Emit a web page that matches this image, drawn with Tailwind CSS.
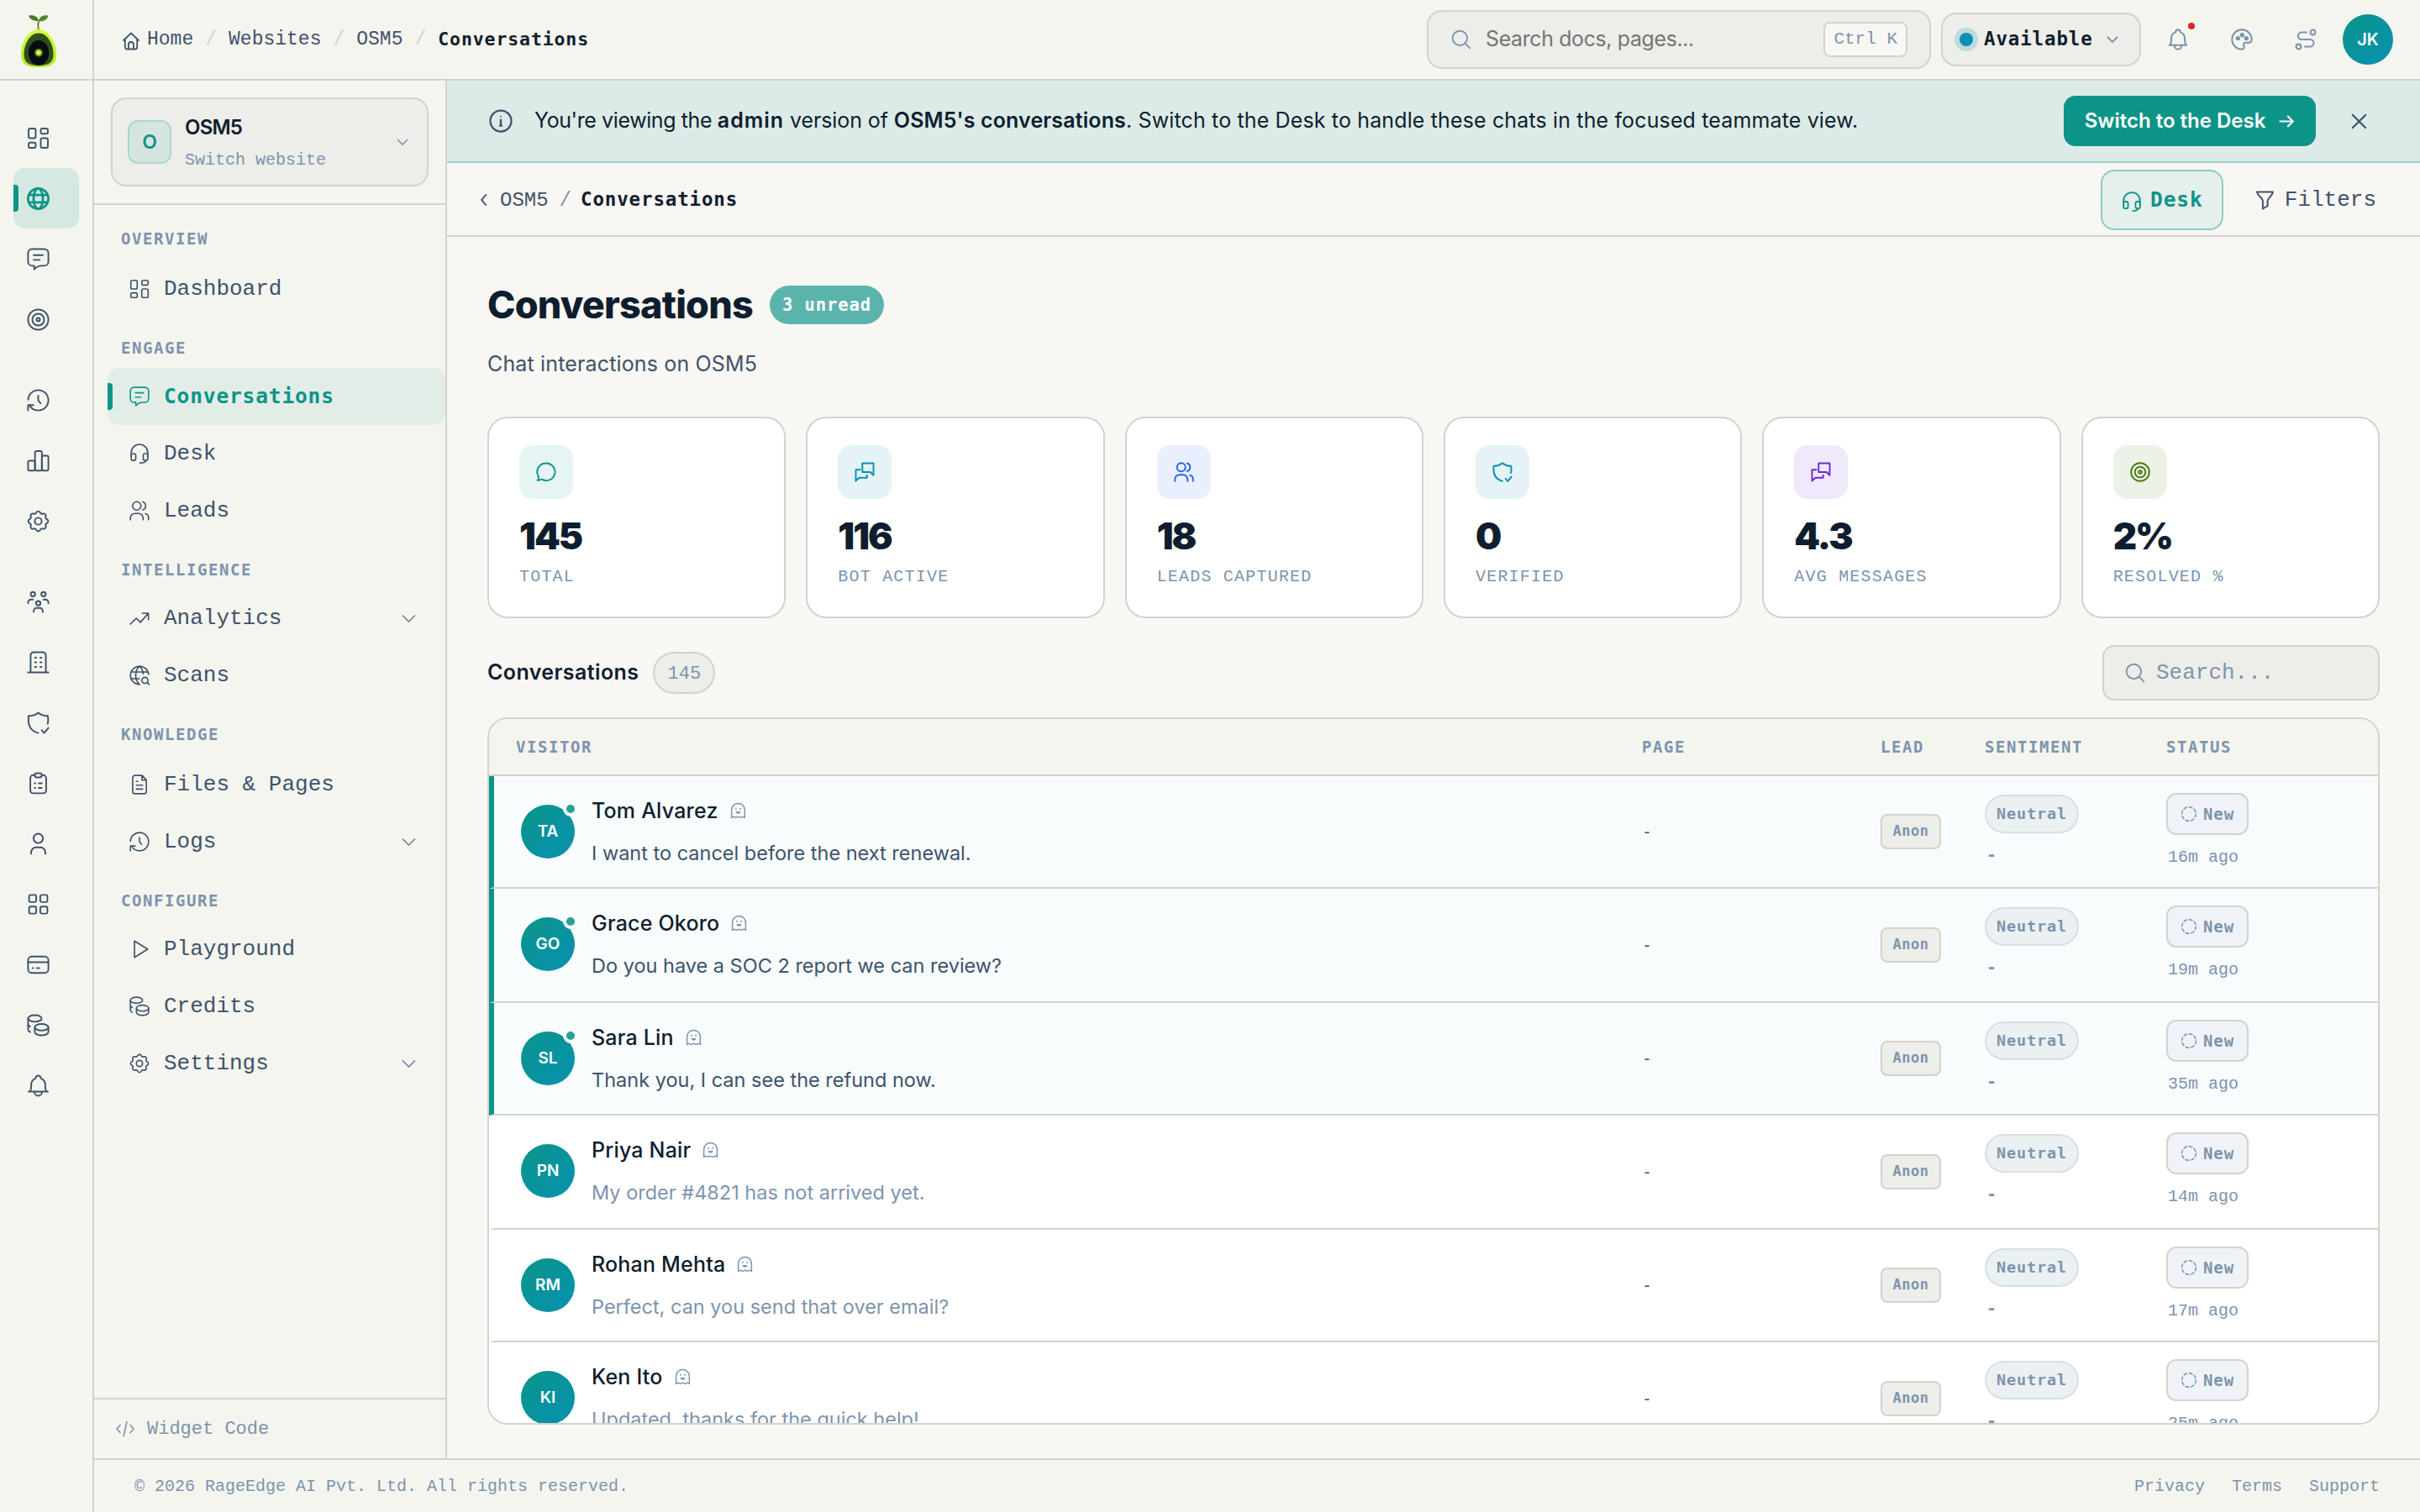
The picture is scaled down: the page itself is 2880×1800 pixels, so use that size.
<!DOCTYPE html>
<html lang="en">

<head>
    <meta charset="UTF-8">
    <meta name="viewport" content="width=device-width, initial-scale=1.0">
    <title>OSM5 - Conversations</title>
    <script src="https://cdn.jsdelivr.net/npm/@tailwindcss/browser@4"></script>
</head>

<body class="w-[2880px] h-[1800px] overflow-hidden bg-[#f9f7f4] text-[#0f1e2e] font-['Inter',sans-serif]">
    <!-- Icon sprite -->
    <svg class="hidden">
        <symbol id="i-dash" viewBox="0 0 24 24"><rect x="2.5" y="2.5" width="7" height="9.5" rx="1.6"/><rect x="2.5" y="16.3" width="7" height="5.2" rx="1.6"/><rect x="14.5" y="2.5" width="7" height="5.2" rx="1.6"/><rect x="14.5" y="12" width="7" height="9.5" rx="1.6"/></symbol>
        <symbol id="i-globe" viewBox="0 0 24 24"><circle cx="12" cy="12" r="10"/><ellipse cx="12" cy="12" rx="4.6" ry="10"/><path d="M2.800 8.300h18.400M2.800 15.700h18.400"/></symbol>
        <symbol id="i-chat" viewBox="0 0 24 24"><path d="M6 2h12a4 4 0 0 1 4 4v8.500a4 4 0 0 1-4 4h-3c-3 0-4.500.8-7 3.500v-3.500H6a4 4 0 0 1-4-4V6a4 4 0 0 1 4-4zM7.500 8h9M7.500 12.700h6"/></symbol>
        <symbol id="i-target" viewBox="0 0 24 24"><circle cx="12" cy="12" r="10"/><circle cx="12" cy="12" r="5.8"/><circle cx="12" cy="12" r="1.7"/></symbol>
        <symbol id="i-history" viewBox="0 0 24 24"><path d="M2 11.500a10 10 0 1 1 1.900 6.400M2 22v-5.300h5.300M12 7.500v4.500l2.300 3"/></symbol>
        <symbol id="i-chart" viewBox="0 0 24 24"><rect x="2" y="12" width="6.800" height="9.700" rx="1.500"/><rect x="8.800" y="2.500" width="6.800" height="19.200" rx="1.500"/><rect x="15.600" y="7" width="6.400" height="14.700" rx="1.500"/></symbol>
        <symbol id="i-gear" viewBox="0 0 24 24"><path d="M20.830 10.280a2 2 0 0 1 0 3.440A2.600 2.600 0 0 0 19.460 17.030A2 2 0 0 1 17.030 19.460A2.600 2.600 0 0 0 13.720 20.830A2 2 0 0 1 10.280 20.830A2.600 2.600 0 0 0 6.970 19.460A2 2 0 0 1 4.540 17.030A2.600 2.600 0 0 0 3.170 13.720A2 2 0 0 1 3.170 10.280A2.600 2.600 0 0 0 4.540 6.970A2 2 0 0 1 6.970 4.540A2.600 2.600 0 0 0 10.280 3.170A2 2 0 0 1 13.720 3.170A2.600 2.600 0 0 0 17.030 4.540A2 2 0 0 1 19.460 6.970A2.600 2.600 0 0 0 20.830 10.280z"/><circle cx="12" cy="12" r="3.400"/></symbol>
        <symbol id="i-team" viewBox="0 0 24 24"><circle cx="6.800" cy="4.400" r="2.200"/><circle cx="17.200" cy="4.400" r="2.200"/><circle cx="12" cy="13.300" r="2.200"/><path d="M2 13.500v-.8a3 3 0 0 1 3-3h1.800M22 13.500v-.8a3 3 0 0 0-3-3h-1.800M7.500 22v-1a3 3 0 0 1 3-3h3a3 3 0 0 1 3 3v1"/></symbol>
        <symbol id="i-building" viewBox="0 0 24 24"><path d="M4.500 22V5a3 3 0 0 1 3-3h9a3 3 0 0 1 3 3v17M2 22h20M8.800 7.500h1.200M14 7.500h1.200M8.800 12h1.200M14 12h1.200M8.800 16.500h1.200M14 16.500h1.200"/></symbol>
        <symbol id="i-shield" viewBox="0 0 24 24"><path d="M21.300 13c.6-2 .6-4.500.2-7.800-3.500.2-6.600-.8-9.500-3.200-2.900 2.400-6 3.400-9.500 3.200C1.500 13.500 3.500 19.800 12 22M15.500 19.300l2.300 2.700 4.200-5"/></symbol>
        <symbol id="i-clipboard" viewBox="0 0 24 24"><path d="M8.500 4H7a2.800 2.800 0 0 0-2.800 2.800V19A2.800 2.800 0 0 0 7 21.800h10a2.800 2.800 0 0 0 2.800-2.800V6.800A2.800 2.800 0 0 0 17 4h-1.500M8.500 12h.6M12.500 12h3M8.500 16.500h.6M12.500 16.500h3"/><rect x="8.500" y="2" width="7" height="4.200" rx="2"/></symbol>
        <symbol id="i-user" viewBox="0 0 24 24"><circle cx="12" cy="6.700" r="4.600"/><path d="M5 22v-1.500a5 5 0 0 1 5-5h4a5 5 0 0 1 5 5V22"/></symbol>
        <symbol id="i-grid" viewBox="0 0 24 24"><rect x="3" y="2.800" width="7" height="7" rx="1.500"/><rect x="14" y="2.800" width="7" height="7" rx="1.500"/><rect x="3" y="14.200" width="7" height="7" rx="1.500"/><rect x="14" y="14.200" width="7" height="7" rx="1.500"/></symbol>
        <symbol id="i-card" viewBox="0 0 24 24"><rect x="2" y="4" width="20" height="16" rx="3.500"/><path d="M2 9.500h20M6.500 15.300h.6M10.800 15.300h2.200"/></symbol>
        <symbol id="i-coins" viewBox="0 0 24 24"><ellipse cx="8.700" cy="5.300" rx="6.700" ry="3.300"/><path d="M2 5.300V16c0 1.200.8 2.200 2 2.800M2 10.500c0 1.200.8 2.200 2 2.800"/><ellipse cx="15.300" cy="14" rx="6.700" ry="3.300"/><path d="M8.600 14v4.700c0 1.800 3 3.300 6.700 3.300s6.700-1.500 6.700-3.300V14"/></symbol>
        <symbol id="i-bell" viewBox="0 0 24 24"><path d="M4 17.500c1-1.500 1.100-3.500 1.100-6.500 0-3.200 1.800-5.300 4.400-6.400C9.700 3 10.700 2 12 2s2.300 1 2.500 2.600c2.600 1.100 4.400 3.200 4.400 6.400 0 3 .1 5 1.100 6.500M2.500 17.800h19M8.300 18a3.700 4 0 0 0 7.400 0"/></symbol>
        <symbol id="i-headset" viewBox="0 0 24 24"><path d="M2.900 16v-5a9.100 9.100 0 0 1 18.200 0v5"/><rect x="2.900" y="12" width="5" height="7.500" rx="2"/><rect x="16.100" y="12" width="5" height="7.500" rx="2"/><path d="M19.500 19.300c-.4 2-2.800 3-7 3"/></symbol>
        <symbol id="i-users" viewBox="0 0 24 24"><circle cx="9" cy="6.700" r="4.600"/><path d="M15.500 2.300a4.600 4.600 0 0 1 0 8.800M2 22v-2a5 5 0 0 1 5-5h4a5 5 0 0 1 5 5v2M18.500 15.300c2.200.6 3.500 2.200 3.500 4.700v2"/></symbol>
        <symbol id="i-trend" viewBox="0 0 24 24"><path d="M2 18.500l6.500-6.500 4.500 4.500L21.300 7M15 6.500h6.800V13.500"/></symbol>
        <symbol id="i-scan" viewBox="0 0 24 24"><path d="M22 11A10 10 0 1 0 12 22M12 22c-5.500-5-5.500-15 0-20 2.500 2.300 3.900 5.400 4.100 8.500M3 8.300h18M3 15.700h9"/><circle cx="18" cy="17.500" r="3.300"/><path d="M20.500 20l2 2"/></symbol>
        <symbol id="i-file" viewBox="0 0 24 24"><path d="M15 2H7a2.500 2.500 0 0 0-2.500 2.500v15A2.500 2.500 0 0 0 7 22h10a2.500 2.500 0 0 0 2.500-2.500V7zM14.800 2v5.200h4.700M8.500 8.500H10M8.500 12.700h7M8.500 17h7"/></symbol>
        <symbol id="i-play" viewBox="0 0 24 24"><path d="M6.500 3l14.500 9-14.500 9z"/></symbol>
        <symbol id="i-code" viewBox="0 0 24 24"><path d="M6.500 7L2 12l4.500 5M17.500 7l4.500 5-4.500 5M14 3l-4 18"/></symbol>
        <symbol id="i-down" viewBox="0 0 24 24"><path d="M4 8l8 8 8-8"/></symbol>
        <symbol id="i-left" viewBox="0 0 24 24"><path d="M15.500 4l-7 8 7 8"/></symbol>
        <symbol id="i-search" viewBox="0 0 24 24"><circle cx="10.500" cy="10.500" r="8"/><path d="M16.500 16.500l5.500 5.500"/></symbol>
        <symbol id="i-home" viewBox="0 0 24 24"><path d="M2.500 11.500L12 2.500l9.500 9M4.800 9.500V19a2.500 2.500 0 0 0 2.500 2.500h9.400a2.500 2.500 0 0 0 2.500-2.500V9.500M9 21.500V16a3 3 0 0 1 6 0v5.500"/></symbol>
        <symbol id="i-info" viewBox="0 0 24 24"><circle cx="12" cy="12" r="10"/><path d="M11 11h1v5.500M10.500 16.500h3M12 7.300v.8"/></symbol>
        <symbol id="i-palette" viewBox="0 0 24 24"><path d="M12 22A10 10 0 1 1 22 12c0 3-2.500 3.600-4.700 3.300-2.300-.3-3.800.2-3.600 2 .1 1.300 1 1.900.7 3.100-.3 1-1.200 1.600-2.400 1.600z"/><g fill="currentColor"><circle cx="8" cy="10.800" r="1.400"/><circle cx="12.300" cy="7.500" r="1.400"/><circle cx="16.600" cy="10.800" r="1.400"/></g></symbol>
        <symbol id="i-route" viewBox="0 0 24 24"><circle cx="19.300" cy="4.700" r="2.500"/><circle cx="4.700" cy="19.300" r="2.500"/><path d="M13.500 4.700H7.800a3.650 3.650 0 0 0 0 7.300h8.700a3.650 3.650 0 0 1 0 7.300h-6"/></symbol>
        <symbol id="i-arrow" viewBox="0 0 24 24"><path d="M3 12h18M14 4.500l7.500 7.500-7.500 7.500"/></symbol>
        <symbol id="i-x" viewBox="0 0 24 24"><path d="M4 4l16 16M20 4L4 20"/></symbol>
        <symbol id="i-filter" viewBox="0 0 24 24"><path d="M3 2.500h18c0 4-6 6.500-6 10.500v5.500L9.500 21.500V13c0-4-6.500-6.500-6.500-10.500z"/></symbol>
        <symbol id="i-bubble" viewBox="0 0 24 24"><path d="M12 2.300a9.700 9.500 0 1 1-4.300 18c-1.700-.8-3.400 1.200-5.200 1 .9-1.500 1.600-2.800.8-5A9.700 9.500 0 0 1 12 2.300z"/></symbol>
        <symbol id="i-bubbles" viewBox="0 0 24 24"><path d="M9.500 2.300h12.200v13.200l-3.500-3.500H9.500zM7 9.500H2.300v12.200l3.700-3.500h8.500V15.500"/></symbol>
        <symbol id="i-ghost" viewBox="0 0 24 24"><path d="M3 21V10.500a9 8.800 0 0 1 18 0V21l-2.800-1.400-3 1.400-3.200-1.400L8.800 21l-3-1.400zM9 8.300v1M15 8.300v1M9.500 13.500c1.200 1.700 3.800 1.700 5 0z"/></symbol>
        <symbol id="i-dotted" viewBox="0 0 24 24"><circle cx="12" cy="12" r="10" stroke-dasharray="4.500 3.350"/></symbol>
    </svg>

    <div class="flex h-full">
        <!-- Icon rail -->
        <nav class="w-[112px] shrink-0 bg-[#f5f5ef] border-r-2 border-[#d3d3ce] flex flex-col">
            <div class="h-24 shrink-0 border-b-2 border-[#d3d3ce] pl-[25px] pt-[18px]">
                <svg class="w-[42px] h-[62px]" viewBox="0 0 42 62">
                    <defs>
                        <linearGradient id="lg-rind" x1="0" y1="0" x2="0" y2="1"><stop offset="0" stop-color="#d2ff3c"/><stop offset="1" stop-color="#b4e619"/></linearGradient>
                        <radialGradient id="lg-core"><stop offset="0" stop-color="#eaff8a"/><stop offset=".5" stop-color="#b9ea2a"/><stop offset="1" stop-color="#4d7a10" stop-opacity=".2"/></radialGradient>
                    </defs>
                    <path d="M20.500 18c1-4-2-6 1-11" fill="none" stroke="#4a7c1f" stroke-width="1.700"/>
                    <path d="M21 7C18 7.500 11 6.500 9 .8 14-.6 20 1 21 7z" fill="#4a7c1f"/>
                    <path d="M21 7C22 1 28-.6 32.500.8 31 6.500 25 8 21 7z" fill="#4f8424"/>
                    <path d="M21 17C34 17 42 34 42 47c0 12-8 15-21 15S0 59 0 47C0 34 8 17 21 17z" fill="url(#lg-rind)"/>
                    <path d="M21 21.500c11 0 17.500 14 17.500 25C38.500 57 32 60 21 60S3.500 57 3.500 46.500c0-11 6.500-25 17.500-25z" fill="#2f4f1b"/>
                    <ellipse cx="21" cy="45" rx="12.200" ry="15" fill="#080d14"/>
                    <circle cx="21" cy="44.700" r="5.500" fill="url(#lg-core)"/>
                </svg>
            </div>
            <div id="rail" class="pt-8 pl-4 text-[#3d536b]"></div>
        </nav>

        <div class="flex-1 min-w-0 flex flex-col">
            <!-- Top bar -->
            <header class="h-24 shrink-0 bg-[#f5f5ef] border-b-2 border-[#d3d3ce] flex items-center justify-between pl-8 pr-8">
                <div class="flex items-center gap-[14px] font-['Liberation_Mono',monospace] text-[23px] text-[#3d536b]">
                    <span class="flex items-center gap-[7px]"><svg class="size-[24px] mt-1" fill="none" stroke="currentColor" stroke-width="1.800"><use href="#i-home"/></svg>Home</span>
                    <span class="text-[#d3d3ce]">/</span>
                    <span>Websites</span>
                    <span class="text-[#d3d3ce]">/</span>
                    <span>OSM5</span>
                    <span class="text-[#d3d3ce]">/</span>
                    <span class="font-['DejaVu_Sans_Mono',monospace] text-[21.5px] tracking-[0.88px] font-bold text-[#0f1e2e]">Conversations</span>
                </div>
                <div class="flex items-center">
                    <div class="w-[600px] h-[70px] rounded-[18px] border-2 border-[#d3d3ce] bg-[#edede9] flex items-center pl-[26px] pr-[26px]">
                        <svg class="size-[26px] text-[#7c94ae]" fill="none" stroke="currentColor" stroke-width="1.700"><use href="#i-search"/></svg>
                        <span class="ml-[16px] text-[25px] tracking-[-0.4px] text-[#757575]">Search docs, pages...</span>
                        <span class="ml-auto h-[42px] rounded-lg border-2 border-[#d3d3ce] bg-[#f9f7f4] px-[10px] flex items-center font-['Liberation_Mono',monospace] text-[21px] text-[#7c94ae]">Ctrl K</span>
                    </div>
                    <div class="ml-3 w-[238px] h-16 rounded-[18px] border-2 border-[#d3d3ce] bg-[#edede9] flex items-center pl-[14px] pr-[23px]">
                        <span class="size-7 rounded-full bg-[#0891b2]/20 flex items-center justify-center"><span class="size-4 rounded-full bg-[#0891b2]"></span></span>
                        <span class="ml-[7px] font-['DejaVu_Sans_Mono',monospace] font-bold text-[22.5px] tracking-[0.85px]">Available</span>
                        <svg class="ml-auto size-[18px] text-[#7c94ae]" fill="none" stroke="currentColor" stroke-width="2.500"><use href="#i-down"/></svg>
                    </div>
                    <div class="ml-[30px] flex items-center gap-12 text-[#7c94ae]">
                        <span class="relative size-7">
                            <svg class="size-[28px]" fill="none" stroke="currentColor" stroke-width="1.800"><use href="#i-bell"/></svg>
                            <span class="absolute left-[26px] -top-[6px] size-2 rounded-full bg-[#dc2626]"></span>
                        </span>
                        <svg class="size-[28px]" fill="none" stroke="currentColor" stroke-width="1.800"><use href="#i-palette"/></svg>
                        <svg class="size-[28px]" fill="none" stroke="currentColor" stroke-width="1.800"><use href="#i-route"/></svg>
                    </div>
                    <span class="ml-[30px] size-[60px] rounded-full bg-linear-to-br from-[#0d9488] to-[#0891b2] text-white text-[20px] font-semibold flex items-center justify-center">JK</span>
                </div>
            </header>

            <div class="flex-1 min-h-0 flex">
                <!-- Website sidebar -->
                <aside class="w-[420px] shrink-0 bg-[#f5f5ef] border-r-2 border-[#d3d3ce] flex flex-col">
                    <div class="h-[148px] shrink-0 border-b-2 border-[#d3d3ce] p-5">
                        <div class="h-[106px] w-[378px] rounded-[18px] border-2 border-[#d3d3ce] bg-[#edede9] flex items-center pl-[18px] pr-[20px]">
                            <span class="size-[52px] rounded-xl border-2 border-[#add6cf] bg-[#d6e4e0] text-[#0d9488] text-[23px] font-semibold flex items-center justify-center">O</span>
                            <div class="ml-4 pt-[3px] flex flex-col">
                                <span class="text-[24px] tracking-[-0.8px] leading-[34px] font-semibold">OSM5</span>
                                <span class="mt-[6px] font-['Liberation_Mono',monospace] text-[20px] leading-[32px] text-[#7c94ae]">Switch website</span>
                            </div>
                            <svg class="ml-auto size-[18px] text-[#7c94ae]" fill="none" stroke="currentColor" stroke-width="2.200"><use href="#i-down"/></svg>
                        </div>
                    </div>
                    <div id="sidebar" class="flex-1 pl-4 font-['Liberation_Mono',monospace] text-[#3d536b]"></div>
                    <div class="h-[72px] shrink-0 border-t-2 border-[#d3d3ce] flex items-center pl-[25px] gap-[14px] font-['Liberation_Mono',monospace] text-[22px] text-[#7c94ae]">
                        <svg class="size-[24px]" fill="none" stroke="currentColor" stroke-width="1.600"><use href="#i-code"/></svg>Widget Code
                    </div>
                </aside>

                <main class="flex-1 min-w-0 flex flex-col">
                    <div class="h-[98px] shrink-0 bg-[#dcebe7] border-b-2 border-[#98d0c9] flex items-center pl-[49px] pr-[60px]">
                        <svg class="size-[30px] text-[#3d536b]" fill="none" stroke="currentColor" stroke-width="1.800"><use href="#i-info"/></svg>
                        <p class="ml-[25px] text-[25px] whitespace-pre"><span class="tracking-[-0.4px]">You're viewing the </span><b class="font-semibold tracking-[1px]">admin</b><span class="tracking-[-0.1px]"> version of </span><b class="font-semibold tracking-[0.13px]">OSM5's conversations</b><span class="tracking-[0.14px]">. Switch to the Desk to handle these chats in the focused teammate view.</span></p>
                        <span class="ml-auto w-[300px] h-[60px] rounded-[14px] bg-[#0d9488] text-[#fdfcfa] text-[24px] font-semibold flex items-center justify-center gap-[14px]">Switch to the Desk<svg class="size-[21px]" fill="none" stroke="currentColor" stroke-width="2.300"><use href="#i-arrow"/></svg></span>
                        <svg class="ml-[39px] size-[25px] text-[#3d536b]" fill="none" stroke="currentColor" stroke-width="2.100"><use href="#i-x"/></svg>
                    </div>

                    <div class="h-[88px] shrink-0 border-b-2 border-[#d3d3ce] flex items-center justify-between pl-[34px] pr-[52px] pt-[2px] font-['Liberation_Mono',monospace]">
                        <div class="flex items-center text-[24px] text-[#3d536b]">
                            <svg class="size-[20px]" fill="none" stroke="currentColor" stroke-width="2.200"><use href="#i-left"/></svg>
                            <span class="ml-[9px] pt-[2px]">OSM5</span>
                            <span class="ml-[13px] pt-[2px] text-[#7c94ae]">/</span>
                            <span class="ml-[11px] font-['DejaVu_Sans_Mono',monospace] text-[22.5px] tracking-[0.85px] font-bold text-[#0f1e2e]">Conversations</span>
                        </div>
                        <div class="flex items-center text-[26px]">
                            <span class="w-[146px] h-[72px] rounded-[16px] border-2 border-[#8fcac3] bg-[#e5efeb] text-[#0d9488] font-['DejaVu_Sans_Mono',monospace] font-bold text-[24.5px] tracking-[0.85px] flex items-center justify-center gap-[9px]"><svg class="size-[26px] mt-1" fill="none" stroke="currentColor" stroke-width="1.700"><use href="#i-headset"/></svg>Desk</span>
                            <span class="ml-[37px] flex items-center gap-[11px] text-[#3d536b]"><svg class="size-[25px]" fill="none" stroke="currentColor" stroke-width="1.900"><use href="#i-filter"/></svg>Filters</span>
                        </div>
                    </div>

                    <div class="flex-1 min-h-0 flex flex-col px-12 pb-10">
                        <div class="mt-[58px] flex items-center">
                            <h1 class="text-[45px] leading-[46px] tracking-[-0.8px] font-extrabold">Conversations</h1>
                            <span class="ml-[20px] w-[136px] h-[46px] rounded-full bg-[#5bb4ab] text-white font-['DejaVu_Sans_Mono',monospace] font-bold text-[20.5px] tracking-[0.9px] flex items-center justify-center">3 unread</span>
                        </div>
                        <p class="mt-[29px] text-[25px] leading-[36px] tracking-[0.15px] text-[#3d536b]">Chat interactions on OSM5</p>

                        <div id="stats" class="mt-[45px] grid grid-cols-6 gap-6"></div>

                        <div class="mt-8 h-[66px] shrink-0 flex items-center">
                            <h2 class="text-[25px] font-semibold tracking-[0.4px]">Conversations</h2>
                            <span class="ml-[17px] w-[74px] h-[50px] rounded-full border-2 border-[#d3d3ce] bg-[#edede9] text-[#7c94ae] font-['Liberation_Mono',monospace] text-[22px] flex items-center justify-center pt-[2px]">145</span>
                            <div class="ml-auto w-[330px] h-[66px] rounded-[14px] border-2 border-[#d3d3ce] bg-[#edede9] text-[#7c94ae] font-['Liberation_Mono',monospace] text-[26px] flex items-center pl-[24px] gap-[12px]">
                                <svg class="size-[26px]" fill="none" stroke="currentColor" stroke-width="1.700"><use href="#i-search"/></svg>Search...
                            </div>
                        </div>

                        <!-- Conversation table -->
                        <div class="mt-5 flex-1 min-h-0 rounded-[24px] border-2 border-[#d3d3ce] bg-white overflow-hidden">
                            <div class="h-[68px] bg-[#f5f5ef] border-b-2 border-[#d3d3ce] pl-[6px] grid grid-cols-[1366px_284px_124px_216px_1fr] items-center font-['DejaVu_Sans_Mono',monospace] font-bold text-[19px] tracking-[1.56px] text-[#7c94ae]">
                                <span class="pl-[26px]">VISITOR</span><span>PAGE</span><span>LEAD</span><span>SENTIMENT</span><span>STATUS</span>
                            </div>
                            <div id="rows"></div>
                        </div>
                    </div>
                </main>
            </div>

            <footer class="h-[64px] shrink-0 bg-[#f5f5ef] border-t-2 border-[#d3d3ce] flex items-center justify-between px-12 pt-[2px] font-['Liberation_Mono',monospace] text-[20px] text-[#7c94ae]">
                <span>© 2026 RageEdge AI Pvt. Ltd. All rights reserved.</span>
                <span class="flex gap-8"><span>Privacy</span><span>Terms</span><span>Support</span></span>
            </footer>
        </div>
    </div>

    <script>
        const icon = (name, cls, sw) => `<svg class="${cls}" fill="none" stroke="currentColor" stroke-width="${sw}" stroke-linecap="round" stroke-linejoin="round"><use href="#i-${name}"/></svg>`;

        // Rail groups
        const rail = [
            ['dash', 'globe', 'chat', 'target'],
            ['history', 'chart', 'gear'],
            ['team', 'building', 'shield', 'clipboard', 'user', 'grid', 'card', 'coins', 'bell']
        ];
        document.getElementById('rail').innerHTML = rail.map(group => `<div class="mb-6">${group.map(name => name === 'globe'
            ? `<div class="relative w-[78px] h-[72px] rounded-[14px] bg-[#d5e8e2] text-[#0d9488] flex items-center pl-[15px]">
                   <span class="absolute left-0 top-5 w-[6px] h-8 rounded-r bg-[#0d9488]"></span>${icon(name, 'size-[29px]', 2.3)}
               </div>`
            : `<div class="h-[72px] flex items-center pl-[15px]">${icon(name, 'size-[29px]', 1.6)}</div>`).join('')}</div>`).join('');

        // Sidebar sections
        const sections = [
            ['OVERVIEW', 'h-[66px] pt-[30px]', [['dash', 'Dashboard']]],
            ['ENGAGE', 'h-[60px] pt-[26px]', [['chat', 'Conversations', 'active'], ['headset', 'Desk'], ['users', 'Leads']]],
            ['INTELLIGENCE', 'h-[60px] pt-[26px]', [['trend', 'Analytics', 'more'], ['scan', 'Scans']]],
            ['KNOWLEDGE', 'h-[62px] pt-[26px]', [['file', 'Files &amp; Pages'], ['history', 'Logs', 'more']]],
            ['CONFIGURE', 'h-[60px] pt-[26px]', [['play', 'Playground'], ['coins', 'Credits'], ['gear', 'Settings', 'more']]]
        ];
        document.getElementById('sidebar').innerHTML = sections.map(([label, cls, items]) => `
            <div class="${cls} pl-4 font-['DejaVu_Sans_Mono',monospace] text-[19px] leading-[20px] font-bold tracking-[1.56px] text-[#7c94ae]">${label}</div>
            ${items.map(([name, text, state]) => `
            <div class="relative h-[68px] flex items-center pl-[25px] ${state === 'active' ? "rounded-[14px] bg-[#e3ede8] text-[#0d9488] font-['DejaVu_Sans_Mono',monospace] font-bold text-[24.5px] tracking-[0.85px]" : 'text-[26px]'}">
                ${state === 'active' ? '<span class="absolute left-0 top-[18px] w-[6px] h-8 rounded-r bg-[#0d9488]"></span>' : ''}
                ${icon(name, 'size-[26px]', 1.5)}<span class="ml-[16px] pt-px">${text}</span>
                ${state === 'more' ? icon('down', 'ml-auto mr-[33px] size-[21px] text-[#6f859c]', 2) : ''}
            </div>`).join('')}`).join('');

        // Stat cards
        const stats = [
            ['bubble', 'bg-[#e6f4f3] text-[#0d9488]', '145', 'TOTAL'],
            ['bubbles', 'bg-[#e5f3f7] text-[#0891b2]', '116', 'BOT ACTIVE'],
            ['users', 'bg-[#e9effd] text-[#2563eb]', '18', 'LEADS CAPTURED'],
            ['shield', 'bg-[#e5f3f7] text-[#0891b2]', '0', 'VERIFIED'],
            ['bubbles', 'bg-[#f0e9fb] text-[#6d28d9]', '4.3', 'AVG MESSAGES'],
            ['target', 'bg-[#ecf2e7] text-[#4d7c0f]', '2%', 'RESOLVED %']
        ];
        document.getElementById('stats').innerHTML = stats.map(([name, cls, value, label]) => `
            <div class="h-[240px] rounded-[24px] border-2 border-[#d3d3ce] bg-white pl-[36px] pt-[32px]">
                <div class="size-16 rounded-2xl flex items-center justify-center ${cls}">${icon(name, 'size-[26px]', 1.8)}</div>
                <div class="mt-[20px] text-[44px] leading-[48px] tracking-[-2px] font-black">${value}</div>
                <div class="mt-[13px] font-['Liberation_Mono',monospace] text-[20px] leading-[24px] tracking-[1.2px] text-[#7c94ae]">${label}</div>
            </div>`).join('');

        // Conversations
        const rows = [
            ['TA', 'Tom Alvarez', 'I want to cancel before the next renewal.', '16m ago', true],
            ['GO', 'Grace Okoro', 'Do you have a SOC 2 report we can review?', '19m ago', true],
            ['SL', 'Sara Lin', 'Thank you, I can see the refund now.', '35m ago', true],
            ['PN', 'Priya Nair', 'My order #4821 has not arrived yet.', '14m ago', false],
            ['RM', 'Rohan Mehta', 'Perfect, can you send that over email?', '17m ago', false],
            ['KI', 'Ken Ito', 'Updated, thanks for the quick help!', '25m ago', false]
        ];
        document.getElementById('rows').innerHTML = rows.map(([initials, name, message, time, unread], i) => `
            <div class="${i % 2 ? 'h-[136px]' : 'h-[134px]'} border-b-2 border-b-[#d3d3ce] border-l-[6px] ${unread ? 'border-l-[#0d9488] bg-[#f8fcfd]' : 'border-l-transparent bg-white'} grid grid-cols-[1366px_284px_124px_216px_1fr] font-['DejaVu_Sans_Mono',monospace] text-[#7c94ae]">
                <div class="flex pl-8 font-['Inter',sans-serif]">
                    <div class="relative mt-[34px] size-16 shrink-0 rounded-full bg-linear-to-br from-[#0d9488] to-[#0891b2] text-white text-[19px] font-semibold flex items-center justify-center">
                        ${initials}${unread ? '<span class="absolute -top-[4px] left-[50px] size-[18px] rounded-full border-4 border-[#f8fcfd] bg-[#28a195]"></span>' : ''}
                    </div>
                    <div class="ml-5 pt-[22px]">
                        <div class="flex items-center gap-[13px] text-[25px] leading-[39px] font-medium tracking-[0.2px] text-[#0f1e2e]">${name}${icon('ghost', 'size-[21px] text-[#7c94ae]', 1.7)}</div>
                        <div class="mt-[13px] text-[23.5px] leading-[36px] ${unread ? 'text-[#3d536b]' : 'text-[#7c94ae]'}">${message}</div>
                    </div>
                </div>
                <div class="flex items-center text-[20px] text-[#3d536b]">-</div>
                <div class="flex items-center"><span class="w-[72px] h-[42px] rounded-lg border-2 border-[#d3d3ce] bg-[#edede9] font-bold text-[17px] tracking-[0.55px] flex items-center justify-center">Anon</span></div>
                <div class="pt-[22px]">
                    <div class="w-[112px] h-[46px] rounded-full border-2 border-[#d5dfe8] bg-[#ebf0f3] font-bold text-[18.5px] tracking-[0.85px] flex items-center justify-center">Neutral</div>
                    <div class="mt-[13px] pl-[2px] text-[20px] leading-[24px] font-bold">-</div>
                </div>
                <div class="pt-5">
                    <div class="w-[98px] h-[50px] rounded-[12px] border-2 border-[#d3d3ce] bg-[#eff3f7] font-bold text-[19px] tracking-[0.9px] flex items-center justify-center gap-[7px]">${icon('dotted', 'size-[20px]', 1.8)}New</div>
                    <div class="mt-[15px] pl-[2px] font-['Liberation_Mono',monospace] text-[20px] leading-[24px]">${time}</div>
                </div>
            </div>`).join('');
    </script>
</body>

</html>
